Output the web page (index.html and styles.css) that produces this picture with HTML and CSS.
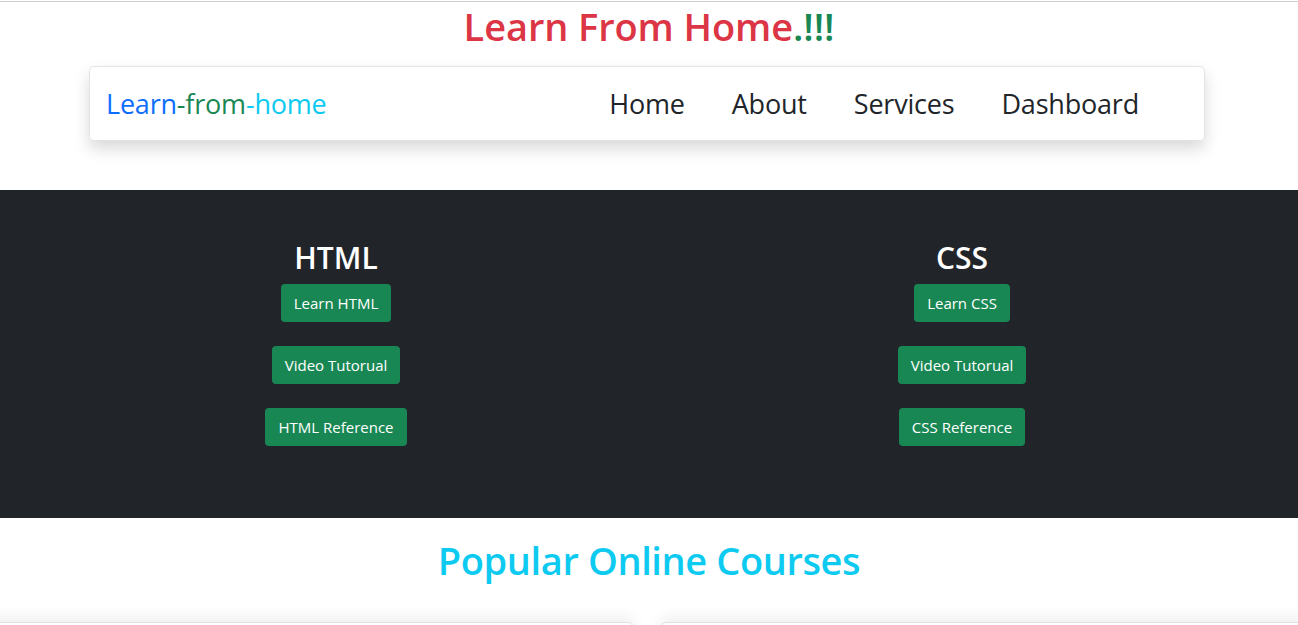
FILE: index.html
```html
<!DOCTYPE html>
<html lang="en">
<head>
<meta charset="utf-8">
<title>Learn From Home</title>
<link rel="stylesheet" href="styles.css">
</head>
<body>
<div class="topline"></div>
<h1 class="site-title">Learn From Home<span class="bang">.!!!</span></h1>

<nav class="navbar">
  <a class="brand" href="#"><span class="b-blue">Learn</span><span class="b-green">-from</span><span class="b-cyan">-home</span></a>
  <ul class="nav-links">
    <li><a href="#">Home</a></li>
    <li><a href="#">About</a></li>
    <li><a href="#">Services</a></li>
    <li><a href="#">Dashboard</a></li>
  </ul>
</nav>

<section class="dark">
  <div class="col">
    <h2>HTML</h2>
    <a class="btn" href="#">Learn HTML</a>
    <a class="btn" href="#">Video Tutorual</a>
    <a class="btn" href="#">HTML Reference</a>
  </div>
  <div class="col">
    <h2>CSS</h2>
    <a class="btn" href="#">Learn CSS</a>
    <a class="btn" href="#">Video Tutorual</a>
    <a class="btn" href="#">CSS Reference</a>
  </div>
</section>

<h1 class="courses-title">Popular Online Courses</h1>

<div class="cards">
  <div class="card"></div>
  <div class="card"></div>
</div>
</body>
</html>
```

FILE: styles.css
```css
html, body {
  margin: 0;
  padding: 0;
  background: #fff;
  font-family: "Open Sans", "Noto Sans", sans-serif;
  color: #212529;
  overflow: hidden;
}

.topline {
  height: 1px;
  margin-top: 1px;
  background: #cfcfcf;
}

.site-title {
  margin: 0;
  text-align: center;
  font-size: 38px;
  font-weight: 600;
  line-height: 49px;
  color: #dc3545;
  letter-spacing: -0.1px;
}
.bang { color: #198754; }

.navbar {
  margin: 15px 0 0 89px;
  height: 73px;
  border: 1px solid #e3e3e6;
  border-radius: 5px;
  box-shadow: 0 8px 16px rgba(0,0,0,0.15);
  display: flex;
  align-items: center;
  justify-content: space-between;
  padding: 0 65px 0 16px;
  box-sizing: content-box;
  width: 1033px;
}
.brand {
  text-decoration: none;
  font-size: 27px;
  letter-spacing: -0.2px;
}
.b-blue { color: #0d6efd; }
.b-green { color: #198754; }
.b-cyan { color: #0dcaf0; }

.nav-links {
  list-style: none;
  margin: 0;
  padding: 0;
  display: flex;
  gap: 47px;
}
.nav-links a {
  text-decoration: none;
  color: #212529;
  font-size: 27px;
  letter-spacing: -0.2px;
}

.dark {
  margin-top: 49px;
  background: #212529;
  height: 328px;
  display: grid;
  grid-template-columns: 626px 626px;
  justify-content: center;
  box-sizing: border-box;
  padding-top: 48px;
}
.col {
  display: flex;
  flex-direction: column;
  align-items: center;
  gap: 24px;
}
.col h2 {
  margin: 0 0 -18px;
  color: #fff;
  font-size: 30px;
  font-weight: 600;
  line-height: 40px;
}
.btn {
  display: inline-block;
  background: #198754;
  color: #fff;
  text-decoration: none;
  font-size: 15px;
  line-height: 24px;
  padding: 7px 13px;
  border-radius: 4px;
}

.courses-title {
  margin: 14px 0 0;
  text-align: center;
  font-size: 38px;
  font-weight: 600;
  line-height: 56px;
  color: #0dcaf0;
  letter-spacing: -0.4px;
}

.cards {
  margin-top: 34px;
  display: flex;
  gap: 26px;
  margin-left: -12px;
}
.card {
  flex: 0 0 644px;
  height: 200px;
  border: 1px solid #dee2e6;
  border-radius: 6px;
  box-shadow: 0 -6px 14px rgba(0,0,0,0.06);
  background: #fff;
}
```
